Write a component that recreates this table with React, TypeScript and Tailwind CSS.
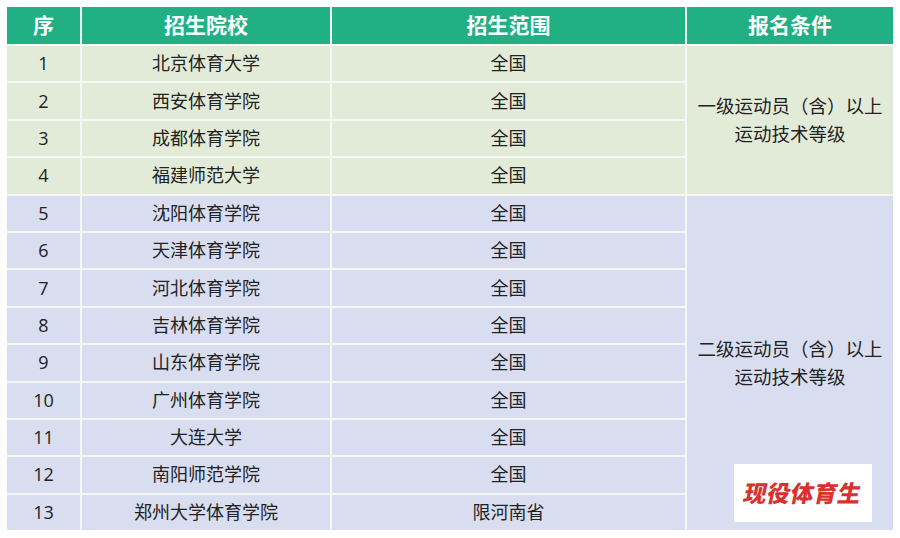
const ROWS: [string, string, string][] = [
  ['1', '北京体育大学', '全国'],
  ['2', '西安体育学院', '全国'],
  ['3', '成都体育学院', '全国'],
  ['4', '福建师范大学', '全国'],
  ['5', '沈阳体育学院', '全国'],
  ['6', '天津体育学院', '全国'],
  ['7', '河北体育学院', '全国'],
  ['8', '吉林体育学院', '全国'],
  ['9', '山东体育学院', '全国'],
  ['10', '广州体育学院', '全国'],
  ['11', '大连大学', '全国'],
  ['12', '南阳师范学院', '全国'],
  ['13', '郑州大学体育学院', '限河南省']
]

const HEADERS = ['序', '招生院校', '招生范围', '报名条件']

export default function App() {
  return (
    <div
      className="relative h-[538px] w-[900px] bg-white pl-[7px] pt-[7px] text-[#222]"
      style={{ fontFamily: '"Open Sans", "Noto Sans CJK SC", sans-serif' }}
    >
      <div className="grid w-[886px] grid-cols-[73px_248px_353px_206px] grid-rows-[37px_repeat(13,35.4px)] gap-[2px] bg-[#f4f7f2]">
        {HEADERS.map(h => (
          <div
            key={h}
            className="flex items-center justify-center bg-[#21b083] text-[21px] font-bold text-white"
          >
            {h}
          </div>
        ))}
        {ROWS.map(([n, school, scope], i) => {
          const bg = i < 4 ? 'bg-[#e2ebd8]' : 'bg-[#d9ddf0]'
          return [
            <div
              key={`n${n}`}
              className={`flex items-center justify-center text-[18px] ${bg}`}
              style={{ gridRow: i + 2, gridColumn: 1 }}
            >
              {n}
            </div>,
            <div
              key={`s${n}`}
              className={`flex items-center justify-center text-[18px] ${bg}`}
              style={{ gridRow: i + 2, gridColumn: 2 }}
            >
              {school}
            </div>,
            <div
              key={`c${n}`}
              className={`flex items-center justify-center text-[18px] ${bg}`}
              style={{ gridRow: i + 2, gridColumn: 3 }}
            >
              {scope}
            </div>
          ]
        })}
        <div className="col-start-4 row-start-2 row-end-6 flex flex-col items-center justify-center bg-[#e2ebd8] text-[18.5px] leading-[28px]">
          <span>一级运动员（含）以上</span>
          <span>运动技术等级</span>
        </div>
        <div className="col-start-4 row-start-6 row-end-[15] flex flex-col items-center justify-center bg-[#d9ddf0] text-[18.5px] leading-[28px]">
          <span>二级运动员（含）以上</span>
          <span>运动技术等级</span>
        </div>
      </div>

      <div className="absolute left-[734px] top-[464px] flex h-[58px] w-[138px] items-center justify-center bg-white">
        <span className="-skew-x-12 text-[23px] font-black tracking-[0.5px] text-[#d8312e]">
          现役体育生
        </span>
      </div>
    </div>
  )
}
